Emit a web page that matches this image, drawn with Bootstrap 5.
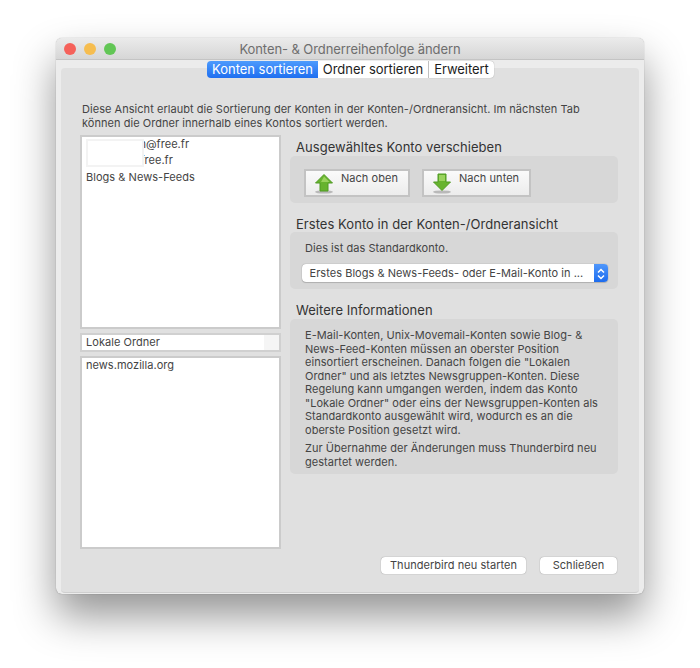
<!DOCTYPE html>
<html lang="de">
<head>
<meta charset="utf-8">
<title>Konten- & Ordnerreihenfolge ändern</title>
<link href="https://cdn.jsdelivr.net/npm/bootstrap@5.3.0/dist/css/bootstrap.min.css" rel="stylesheet">
<style>
html,body{background:#fff;height:668px;overflow:hidden}
body{font-family:"Inter","Liberation Sans",sans-serif;font-size:11px;letter-spacing:.04px;color:#444;padding:38px 56px 0;line-height:14px}
.mac-win{width:588px;height:556px;background:#ececec;border-radius:6px;box-shadow:0 0 1px rgba(0,0,0,.45),0 22px 42px rgba(0,0,0,.42)}
.mac-title{height:22px;background:linear-gradient(#ebebeb,#d6d6d6);border-bottom:1px solid #c4c4c4;border-radius:6px 6px 0 0;position:relative;font-size:13px;letter-spacing:-.08px;color:#6e6e6e;line-height:23px}
.mac-lights{position:absolute;left:8px;top:5px;gap:8px}
.mac-light{width:12px;height:12px;border-radius:50%}
.mac-panel{display:flow-root;margin:8px 5px 0;height:525px;background:#e0e0e0;border-radius:4px;border-bottom:1px solid #cfcfcf;padding:0 21px 0 19px}
.mac-tabs{margin-top:-7px;height:17px;font-size:13px;letter-spacing:-.04px;line-height:17px;color:#1c1c1c;padding-left:127px;white-space:nowrap}
.mac-tab{background:#fff;height:17px;border-right:1px solid #c8c8c8;text-align:center}
.mac-tab:last-child{border-radius:0 4px 4px 0;border-right:0;box-shadow:0 0 1px rgba(0,0,0,.4)}
.mac-tab-on{background:linear-gradient(#4d9bfd,#1f6ff0);color:#fff;border-radius:4px 0 0 4px;border-right:0;width:111px}
.mac-t2{width:111px}.mac-t3{width:65px}
.mac-intro{margin:24px 0 5px 2px;height:28px}
.mac-body{gap:9px}
.mac-left{width:201px}
.mac-list{background:#fff;border:2px solid #cbcbcb;padding:0 4px;line-height:16.5px;position:relative}
.mac-l1{height:194px}.mac-l2{height:193px;margin-top:4px;line-height:15px}
.mac-lines{margin-top:-1.500px}
.mac-mask{position:absolute;left:6px;top:4px;width:54px;height:24px;background:#fff;outline:2px solid #f3f3f3}
.mac-acc1{padding-left:53.4px}
.mac-acc2{padding-left:54.4px}
.mac-sel{height:19px;margin-top:4px;background:#fff;border:2px solid #d0d0d0;padding-left:4px;line-height:15px}
.mac-sel i{width:15px;height:15px;background:#f5f5f5;margin-left:auto;display:block}
.mac-right{width:328px;padding-top:4px}
.mac-h{font-size:13px;line-height:16px;color:#333;padding-left:6px;height:16px}
.mac-box{background:#d7d7d7;border-radius:5px}
.mac-b1{height:47px;margin-top:1px;padding:13px 14px 0;gap:12px}
.mac-h2{margin-top:13px;height:16px}
.mac-b2{height:57px;padding:9px 11px 0 11px}
.mac-h3{margin-top:13px;height:16px}
.mac-b3{height:155px;padding:10px 12px 0 15px;margin-top:1px}
.mac-b3 p{margin:0 0 5px;line-height:13.500px}
.mac-move{height:28px;background:linear-gradient(#fafafa,#ececec);border:2px solid #c3c3c3;line-height:14px;padding:0 0 0 8px;gap:7px}
.mac-m1{width:106px}
.mac-m2{width:109px}
.mac-move svg{margin-top:1.500px;flex:none}
.mac-drop{height:18px;margin:9px 0 0 1px;background:#fff;border-radius:4px;box-shadow:0 0 1px rgba(0,0,0,.45),0 1px 1px rgba(0,0,0,.15);padding-left:7.500px;line-height:18px;width:306px;position:relative}
.mac-drop b{position:absolute;right:0;top:0;width:14px;height:18px;background:linear-gradient(#4f97fb,#1d6cee);border-radius:0 4px 4px 0}
.mac-foot{margin-top:8px;gap:14px;padding-right:1px}
.mac-btn{height:17px;background:#fff;border-radius:4px;box-shadow:0 0 1px rgba(0,0,0,.5);line-height:17px;text-align:center}
.mac-f1{width:145px}.mac-f2{width:77px}
</style>
</head>
<body>
<div class="mac-win">
  <div class="mac-title text-center">Konten- &amp; Ordnerreihenfolge ändern
    <div class="mac-lights d-flex">
      <div class="mac-light" style="background:#f5615a"></div>
      <div class="mac-light" style="background:#f6bd4f"></div>
      <div class="mac-light" style="background:#62c655"></div>
    </div>
  </div>
  <div class="mac-panel">
    <div class="mac-tabs d-flex">
      <div class="mac-tab mac-tab-on">Konten sortieren</div>
      <div class="mac-tab mac-t2">Ordner sortieren</div>
      <div class="mac-tab mac-t3">Erweitert</div>
    </div>
    <div class="mac-intro">Diese Ansicht erlaubt die Sortierung der Konten in der Konten-/Ordneransicht. Im nächsten Tab<br>können die Ordner innerhalb eines Kontos sortiert werden.</div>
    <div class="d-flex mac-body">
      <div class="mac-left">
        <div class="mac-list mac-l1">
          <div class="mac-mask"></div>
          <div class="mac-lines">
            <div class="mac-acc1">n@free.fr</div>
            <div class="mac-acc2">free.fr</div>
            <div>Blogs &amp; News-Feeds</div>
          </div>
        </div>
        <div class="mac-sel d-flex">Lokale Ordner<i></i></div>
        <div class="mac-list mac-l2">news.mozilla.org</div>
      </div>
      <div class="mac-right">
        <div class="mac-h">Ausgewähltes Konto verschieben</div>
        <div class="mac-box mac-b1 d-flex">
          <div class="mac-move mac-m1 d-flex">
            <svg width="20" height="21" viewBox="0 0 20 21"><ellipse cx="10" cy="19" rx="9" ry="1.6" fill="#b9b9b9"/><path d="M10 1.5 18.500 10H14V18H6V10H1.500Z" fill="#67b32e" stroke="#4f9a22" stroke-width="1"/><path d="M10 3.500 15.500 9H7Z" fill="#9ad35d"/></svg>
            <span>Nach oben</span>
          </div>
          <div class="mac-move mac-m2 d-flex">
            <svg width="20" height="21" viewBox="0 0 20 21"><ellipse cx="10" cy="19" rx="9" ry="1.600" fill="#b9b9b9"/><path d="M6 1H14V9H18.500L10 17.500 1.500 9H6Z" fill="#67b32e" stroke="#4f9a22" stroke-width="1"/><path d="M7 2H13V8H7Z" fill="#9ad35d"/></svg>
            <span>Nach unten</span>
          </div>
        </div>
        <div class="mac-h mac-h2">Erstes Konto in der Konten-/Ordneransicht</div>
        <div class="mac-box mac-b2">
          <div class="ps-1">Dies ist das Standardkonto.</div>
          <div class="mac-drop">Erstes Blogs &amp; News-Feeds- oder E-Mail-Konto in ...<b><svg width="14" height="18" viewBox="0 0 14 18" fill="none" stroke="#fff" stroke-width="1.500"><path d="M4 7.500 7 4.500 10 7.500M4 10.500 7 13.500 10 10.500"/></svg></b></div>
        </div>
        <div class="mac-h mac-h3">Weitere Informationen</div>
        <div class="mac-box mac-b3">
          <p>E-Mail-Konten, Unix-Movemail-Konten sowie Blog- &amp; News-Feed-Konten müssen an oberster Position einsortiert erscheinen. Danach folgen die "Lokalen Ordner" und als letztes Newsgruppen-Konten. Diese Regelung kann umgangen werden, indem das Konto "Lokale Ordner" oder eins der Newsgruppen-Konten als Standardkonto ausgewählt wird, wodurch es an die oberste Position gesetzt wird.</p>
          <p>Zur Übernahme der Änderungen muss Thunderbird neu gestartet werden.</p>
        </div>
      </div>
    </div>
    <div class="d-flex justify-content-end mac-foot">
      <div class="mac-btn mac-f1">Thunderbird neu starten</div>
      <div class="mac-btn mac-f2">Schließen</div>
    </div>
  </div>
</div>
<script src="https://cdn.jsdelivr.net/npm/bootstrap@5.3.0/dist/js/bootstrap.bundle.min.js"></script>
</body>
</html>
